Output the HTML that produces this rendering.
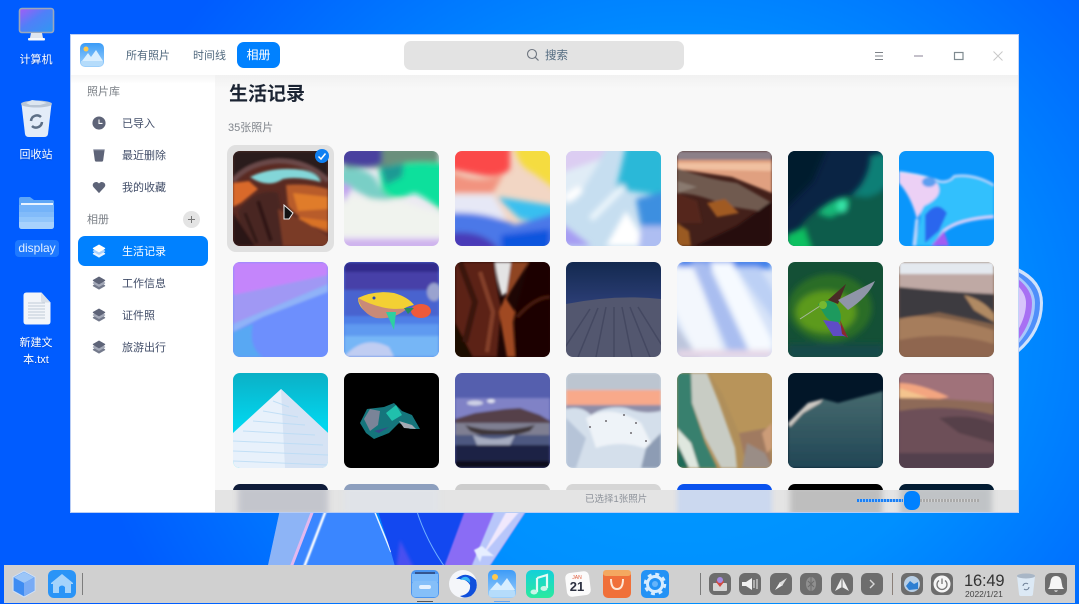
<!DOCTYPE html>
<html><head><meta charset="utf-8">
<style>
*{margin:0;padding:0;box-sizing:border-box}
html,body{width:1079px;height:604px;overflow:hidden}
body{position:relative;font-family:"Liberation Sans","Noto Sans CJK SC",sans-serif;background:radial-gradient(ellipse 600px 540px at 680px 330px,#00a0ff 0%,#0090ff 50%,#0068ff 88%,#005cff 100%);color:#414d68}
.a{position:absolute}
.lbl{position:absolute;color:#fff;font-size:11px;line-height:17px;text-align:center;width:72px;left:0;text-shadow:0 1px 1px rgba(0,30,100,.3)}
#win{position:absolute;left:70px;top:34px;width:949px;height:479px;background:#fff;border:1px solid #b9cdf4;overflow:hidden}
.t{position:absolute;font-size:11px;line-height:16px;white-space:nowrap}
.th{position:absolute;width:95px;height:95px;border-radius:7px;overflow:hidden}
.th svg{display:block;width:95px;height:95px}
.it{position:absolute;left:122px;font-size:11px;line-height:16px;color:#414d68;white-space:nowrap}
.ic{position:absolute;left:92px;width:14px;height:14px}
.tray{position:absolute;top:573px;width:22px;height:22px;border-radius:6px;background:#6d6d6d}
.tray svg{display:block;width:22px;height:22px}
.dk{position:absolute}
</style></head>
<body>
<!-- wallpaper shapes -->
<svg class="a" style="left:0;top:0" width="1079" height="604" viewBox="0 0 1079 604">
<defs><filter id="w1"><feGaussianBlur stdDeviation=".8"/></filter><filter id="w2"><feGaussianBlur stdDeviation="1.500"/></filter></defs>
<path d="M281 505L267 570H400L392 550L372 505Z" fill="#3a86ff"/>
<path d="M281 505L267 570H290L315 505Z" fill="#8db4f6"/>
<path d="M315 505L290 570" stroke="#e2b8ee" stroke-width="3" fill="none"/>
<path d="M328 505L303 570" stroke="#fff" stroke-width="2.500" fill="none" filter="url(#w1)"/>
<path d="M372 505L391 552" stroke="#e8f4ff" stroke-width="1.500" fill="none"/>
<path d="M372 505H470L443 570H392Z" fill="#1348f0" opacity="0"/>
<path d="M376 505H470L443 570H396L391 552Z" fill="#1348f0"/>
<path d="M400 540L415 570H396Z" fill="#4a50f0" filter="url(#w2)"/>
<path d="M415 505Q425 540 447 570" stroke="#6fb0ff" stroke-width="1" fill="none"/>
<path d="M467 505H530L487 570H443Z" fill="#8a6cf5" filter="url(#w1)"/>
<path d="M497 505H530L487 570H470Z" fill="#b8c6fa" filter="url(#w1)"/>
<path d="M510 505H525L482 556Z" fill="#f0e8fc" filter="url(#w1)"/>
<path d="M474 550L482 546L494 556L482 556L480 562Z" fill="#e6eeff" filter="url(#w1)"/>
<path d="M1018 268Q1043 280 1043 303Q1043 332 1018 353Z" fill="#cfe2fc"/>
<path d="M1018 272Q1040 283 1040 303Q1040 329 1018 349Z" fill="#4f8ffa"/>
<path d="M1018 276Q1035 288 1035 303Q1035 325 1018 344Z" fill="#aac8fb"/>
<path d="M1018 279Q1032 290 1032 303Q1032 322 1018 340Z" fill="#a870f3"/>
<path d="M1018 286Q1026 294 1026 303Q1026 316 1018 330Z" fill="#d8c5fb"/>
</svg>

<!-- desktop icons -->
<svg class="a" style="left:18px;top:7px" width="37" height="36" viewBox="0 0 37 36">
<defs><linearGradient id="m1" x1="0" y1="0" x2="1" y2="1"><stop offset="0" stop-color="#a45cf6"/><stop offset=".45" stop-color="#4f80f8"/><stop offset="1" stop-color="#2f98f2"/></linearGradient></defs>
<rect x="1.500" y="1.500" width="34" height="24" rx="2.500" fill="url(#m1)" stroke="#9aa8bc" stroke-width="1.600"/>
<path d="M13 26H24L25 31H12Z" fill="#dfe5ee"/><rect x="10" y="31" width="17" height="2.500" rx="1" fill="#f6f8fb"/></svg>
<div class="lbl" style="top:52px">计算机</div>
<svg class="a" style="left:20px;top:99px" width="33" height="39" viewBox="0 0 33 39">
<path d="M1.500 5L5 35Q5.500 38 9 38H24Q27.500 38 28 35L31.500 5Z" fill="#e3ecf8"/><ellipse cx="16.500" cy="5" rx="15.500" ry="3.500" fill="#b8c5d5"/><path d="M6 4L12 1L20 2L27 4L20 6H10Z" fill="#dde6f0"/>
<path d="M11 22A6 6 0 0 1 21 18M22 23A6 6 0 0 1 12 27" stroke="#5d6f86" stroke-width="2.500" fill="none"/></svg>
<div class="lbl" style="top:147px">回收站</div>
<svg class="a" style="left:19px;top:196px" width="36" height="34" viewBox="0 0 36 34">
<path d="M0 3Q0 1 2 1H11L15 4H33Q35 4 35 6V30Q35 33 32 33H3Q0 33 0 30Z" fill="#5ea6f7"/>
<rect x="2" y="7" width="32" height="2" fill="#e9f3ff"/><rect x="0" y="9" width="35" height="7" fill="#74b3f9"/><rect x="0" y="16" width="35" height="5" fill="#82bbfa"/><rect x="0" y="21" width="35" height="5" fill="#92c6fb"/><path d="M0 26H35V30Q35 33 32 33H3Q0 33 0 30Z" fill="#a8d2fd"/></svg>
<div class="a" style="left:15px;top:240px;width:44px;height:17px;border-radius:4px;background:rgba(60,150,255,.5);color:#e4f0ff;font-size:12px;line-height:17px;text-align:center">display</div>
<svg class="a" style="left:23px;top:292px" width="28" height="33" viewBox="0 0 28 33">
<path d="M3 0H18L27 10V29Q27 32 24 32H3Q0 32 0 29V3Q0 0 3 0Z" transform="translate(.5 .5)" fill="#f2f5f9"/>
<path d="M18 .5L27.500 10.500H20Q18 10.500 18 8.500Z" fill="#d8dfe8"/>
<g stroke="#c0cad6" stroke-width="1"><path d="M5 11H22M5 14H22M5 17H22M5 20H22M5 23H22M5 26H22"/></g></svg>
<div class="lbl" style="top:335px">新建文</div>
<div class="lbl" style="top:352px">本.txt</div>

<!-- window -->
<div id="win"></div>
<div class="a" style="left:71px;top:75px;width:947px;height:437px;background:#fff"></div>
<div class="a" style="left:215px;top:75px;width:803px;height:437px;background:linear-gradient(#f1f1f1 0,#f8f8f8 14px)"></div>
<div class="a" style="left:71px;top:75px;width:144px;height:9px;background:linear-gradient(#f5f5f5,#fff)"></div>

<!-- app logo -->
<svg class="a" style="left:80px;top:43px" width="24" height="24" viewBox="0 0 24 24">
<defs><linearGradient id="lg" x1="0" y1="0" x2="0" y2="1"><stop offset="0" stop-color="#3a9cf7"/><stop offset="1" stop-color="#9ed0fb"/></linearGradient></defs>
<rect width="24" height="24" rx="5" fill="url(#lg)"/><circle cx="6" cy="6" r="2.500" fill="#ffc94d"/><path d="M2 18L8 10L11 14L16 7L23 18Z" fill="#d8eeff"/><path d="M1 18H23V19Q23 23 19 23H5Q1 23 1 19Z" fill="#b5dcfb"/></svg>
<div class="t" style="left:126px;top:48px;color:#526a7f">所有照片</div>
<div class="t" style="left:193px;top:48px;color:#526a7f">时间线</div>
<div class="a" style="left:237px;top:42px;width:43px;height:26px;border-radius:7px;background:#0081ff;color:#fff;font-size:12px;line-height:26px;text-align:center">相册</div>
<div class="a" style="left:404px;top:41px;width:280px;height:29px;border-radius:7px;background:#e3e3e3"></div>
<svg class="a" style="left:526px;top:48px" width="14" height="14" viewBox="0 0 14 14"><circle cx="6" cy="6" r="4.500" stroke="#6f7680" stroke-width="1.100" fill="none"/><path d="M9.300 9.300L12.500 12.500" stroke="#6f7680" stroke-width="1.200"/></svg>
<div class="t" style="left:545px;top:48px;color:#526a7f;font-size:11.500px">搜索</div>
<svg class="a" style="left:870px;top:48px" width="135" height="16" viewBox="0 0 135 16">
<path d="M5 4.500H13M5 8H13M5 11.500H13" stroke="#7d8288" stroke-width="1"/>
<path d="M44 8H53" stroke="#8a8094" stroke-width="1"/>
<rect x="84.500" y="4.500" width="8.500" height="7" fill="none" stroke="#7f8a90" stroke-width="1.200"/>
<path d="M123.500 3.500L132.500 12.500M132.500 3.500L123.500 12.500" stroke="#c9c9c9" stroke-width="1"/></svg>

<!-- sidebar -->
<div class="t" style="left:87px;top:84px;color:#7a7f86">照片库</div>
<svg class="ic" style="top:116px" viewBox="0 0 16 16"><circle cx="8" cy="8" r="7.500" fill="#5e6478"/><path d="M8 4V8.500H12" stroke="#fff" stroke-width="1.200" fill="none"/></svg>
<div class="it" style="top:116px">已导入</div>
<svg class="ic" style="top:148px" viewBox="0 0 16 16"><path d="M1.500 1.500H14.500L12.800 14Q12.600 15.500 11.500 15.500H4.500Q3.400 15.500 3.200 14Z" fill="#5e6478"/><path d="M2 2H14" stroke="#a0a5b4" stroke-width="1.200"/></svg>
<div class="it" style="top:148px">最近删除</div>
<svg class="ic" style="top:180px" viewBox="0 0 16 16"><path d="M8 15L1.800 8.300Q0 6 1.500 3.800Q3 2 5.300 2.300Q7 2.600 8 4Q9 2.600 10.700 2.300Q13 2 14.500 3.800Q16 6 14.200 8.300Z" fill="#5e6478"/></svg>
<div class="it" style="top:180px">我的收藏</div>
<div class="t" style="left:87px;top:212px;color:#7a7f86">相册</div>
<div class="a" style="left:183px;top:211px;width:17px;height:17px;border-radius:50%;background:#e4e4e4"></div>
<svg class="a" style="left:183px;top:211px" width="17" height="17" viewBox="0 0 17 17"><path d="M5 8.500H12M8.500 5V12" stroke="#777" stroke-width="1"/></svg>
<div class="a" style="left:78px;top:236px;width:130px;height:30px;border-radius:7px;background:#0081ff"></div>
<svg class="ic" style="top:244px" viewBox="0 0 16 16"><path d="M1 10.500L8 6.500L15 10.500V11.500L8 15.500L1 11.500Z" fill="#e8f3ff"/><path d="M1 7.500L8 3.500L15 7.500V8.500L8 12.500L1 8.500Z" fill="#a9d2ff"/><path d="M8 .5L15 4.500V5.500L8 9.500L1 5.500V4.500Z" fill="#fff"/></svg>
<div class="it" style="top:244px;color:#fff">生活记录</div>
<svg class="ic" style="top:276px" viewBox="0 0 16 16"><path d="M1 10.500L8 6.500L15 10.500V11.500L8 15.500L1 11.500Z" fill="#747a8c"/><path d="M1 7.500L8 3.500L15 7.500V8.500L8 12.500L1 8.500Z" fill="#a4a9b8"/><path d="M8 .5L15 4.500V5.500L8 9.500L1 5.500V4.500Z" fill="#5e6478"/></svg>
<div class="it" style="top:276px">工作信息</div>
<svg class="ic" style="top:308px" viewBox="0 0 16 16"><path d="M1 10.500L8 6.500L15 10.500V11.500L8 15.500L1 11.500Z" fill="#747a8c"/><path d="M1 7.500L8 3.500L15 7.500V8.500L8 12.500L1 8.500Z" fill="#a4a9b8"/><path d="M8 .5L15 4.500V5.500L8 9.500L1 5.500V4.500Z" fill="#5e6478"/></svg>
<div class="it" style="top:308px">证件照</div>
<svg class="ic" style="top:340px" viewBox="0 0 16 16"><path d="M1 10.500L8 6.500L15 10.500V11.500L8 15.500L1 11.500Z" fill="#747a8c"/><path d="M1 7.500L8 3.500L15 7.500V8.500L8 12.500L1 8.500Z" fill="#a4a9b8"/><path d="M8 .5L15 4.500V5.500L8 9.500L1 5.500V4.500Z" fill="#5e6478"/></svg>
<div class="it" style="top:340px">旅游出行</div>

<!-- content header -->
<div class="a" style="left:229px;top:82px;font-size:19px;line-height:26px;font-weight:bold;color:#1b2433;white-space:nowrap">生活记录</div>
<div class="t" style="left:228px;top:120px;color:#80858c">35张照片</div>
<div class="a" style="left:227px;top:145px;width:107px;height:107px;border-radius:9px;background:#e0e0e0"></div>

<svg width="0" height="0" style="position:absolute"><defs>
<filter id="b" x="-20%" y="-20%" width="140%" height="140%"><feGaussianBlur stdDeviation="3"/></filter>
<filter id="s" x="-20%" y="-20%" width="140%" height="140%"><feGaussianBlur stdDeviation="1.200"/></filter>
</defs></svg>

<!-- row 1 -->
<div class="th" style="left:233px;top:151px"><svg viewBox="0 0 95 95"><rect width="95" height="95" fill="#5a2a22"/>
<g filter="url(#s)"><path d="M0 0H95V30Q60 5 30 12Q10 20 0 35Z" fill="#2c1a1c"/><path d="M0 30Q15 12 45 10Q75 10 95 30" fill="none" stroke="#6a4a48" stroke-width="5"/>
<path d="M53 34Q75 32 95 38V82Q70 72 55 55Z" fill="#b85c2c"/><path d="M60 42L95 46V58L65 60Z" fill="#e07c2c"/><path d="M65 66L95 70V78L72 74Z" fill="#d97228"/>
<path d="M17 26Q40 15 70 19Q85 22 88 31Q65 25 50 28Q35 38 17 26Z" fill="#83d6d8"/>
<path d="M0 32L16 30L25 38L8 52L0 56Z" fill="#d9692a"/>
<path d="M5 60Q25 36 45 42L55 95H10Z" fill="#4a2622"/><path d="M45 58Q70 68 95 85V95H50Z" fill="#7a3a28"/><path d="M0 62L22 95H0Z" fill="#2a1616"/><path d="M25 50L38 90" stroke="#2e1818" stroke-width="4"/><path d="M12 62L24 92" stroke="#2e1818" stroke-width="3"/></g></svg></div>
<div class="th" style="left:344px;top:151px"><svg viewBox="0 0 95 95"><rect width="95" height="95" fill="#eceaf2"/>
<g filter="url(#b)"><rect x="0" y="-5" width="95" height="22" fill="#6b8f7c"/><path d="M-5 -5H38V12Q25 20 -5 12Z" fill="#4a3f9f"/><path d="M35 18Q60 8 100 12V62Q80 45 70 42Q50 52 38 42Z" fill="#0fe09c"/><path d="M-5 18Q20 14 32 28Q38 44 50 48L30 50L-5 30Z" fill="#79cfc6"/><path d="M36 15Q50 15 60 12L58 26L42 34Z" fill="#1a9a94"/><path d="M-5 42Q30 50 60 50Q85 60 100 62V85H-5Z" fill="#f0f3ee"/><path d="M-5 88H100V100H-5Z" fill="#cfb2ee"/><path d="M-5 30L8 36L0 52Z" fill="#c0a0ee"/></g></svg></div>
<div class="th" style="left:455px;top:151px"><svg viewBox="0 0 95 95"><rect width="95" height="95" fill="#f2d6c4"/>
<g filter="url(#b)"><path d="M-5 -5H55V18Q45 28 25 24Q5 20 -5 18Z" fill="#fb4a48"/><path d="M58 -5H100V38L78 22Q62 15 60 -5Z" fill="#f5dc3f"/><path d="M-5 20Q20 34 48 24L38 42H-5Z" fill="#f2937f"/><path d="M42 46L100 55V72L65 68Z" fill="#38bff0"/><path d="M-5 44H38L52 68L-5 64Z" fill="#e6e8f6"/><path d="M-5 62Q30 60 60 74L100 62V100H-5Z" fill="#4c78e8"/><path d="M-5 82Q30 78 45 100H-5Z" fill="#4a3ab8"/><path d="M46 84L95 78V100H46Z" fill="#0f55de"/></g></svg></div>
<div class="th" style="left:566px;top:151px"><svg viewBox="0 0 95 95"><rect width="95" height="95" fill="#c6def0"/>
<g filter="url(#b)"><path d="M60 -5H100V45L50 38Z" fill="#2cb8d8"/><path d="M-5 -5H42L25 22H-5Z" fill="#dccdf2"/><path d="M70 48L100 40V75L75 75Z" fill="#3d8fe0"/><path d="M-5 22L35 8L10 50L-5 55Z" fill="#e0ecf6"/><path d="M0 48L15 38" stroke="#fff" stroke-width="8"/><path d="M25 68L58 35" stroke="#eef7fc" stroke-width="6"/><path d="M40 95L60 60L82 95Z" fill="#fff"/><path d="M-5 72L25 95H-5Z" fill="#a69cf3"/><path d="M75 75H100V100H72Z" fill="#aebef2"/></g></svg></div>
<div class="th" style="left:677px;top:151px"><svg viewBox="0 0 95 95"><rect width="95" height="95" fill="#43201a"/>
<g filter="url(#s)"><rect width="95" height="10" fill="#8c8088"/><path d="M0 9H95V42L55 26L0 18Z" fill="#e0a080"/><path d="M0 12L95 12V20L0 18Z" fill="#f0c0a0"/><path d="M0 17Q30 28 60 32L95 52V62L50 55Q20 42 0 42Z" fill="#6f5a50"/><path d="M0 30L20 36L0 42Z" fill="#8a7a70"/><path d="M30 52L48 48L62 62L40 66Z" fill="#a05a24"/><path d="M0 42L20 50L25 72L0 72Z" fill="#54281c"/><path d="M18 95L60 75L95 50V95Z" fill="#260c0a"/><path d="M0 72L12 80L14 95H0Z" fill="#9a5a20"/></g></svg></div>
<div class="th" style="left:788px;top:151px"><svg viewBox="0 0 95 95"><rect width="95" height="95" fill="#0a2444"/>
<g filter="url(#b)"><path d="M-5 -5H40L25 30L-5 60Z" fill="#031a2e"/><path d="M82 5L100 0V35L80 50L60 48L72 35Q82 20 82 5Z" fill="#0f7f76"/><path d="M15 72Q35 50 60 44L80 46L100 38V100H5Z" fill="#0d5c4c"/><path d="M30 62Q48 44 60 48Q62 58 42 66Z" fill="#14b878"/><ellipse cx="54" cy="55" rx="5" ry="6" fill="#38e8aa"/><path d="M-2 84L16 76L24 100H-2Z" fill="#10c060"/></g></svg></div>
<div class="th" style="left:899px;top:151px"><svg viewBox="0 0 95 95"><rect width="95" height="95" fill="#0a96fb"/>
<g filter="url(#s)"><path d="M0 21Q25 24 40 30Q50 32 55 25Q75 22 95 34V66Q70 68 50 75Q40 85 35 95H15L20 75Q25 60 15 45L0 32Z" fill="#33c0fd"/><path d="M0 21Q20 22 38 32Q46 45 25 55L18 68Q12 45 0 32Z" fill="#ecd0f5"/><path d="M26 64Q38 48 48 62L40 80L26 92Z" fill="#2a66ee"/><path d="M0 21Q25 24 40 30Q50 32 55 25Q75 22 95 34" fill="none" stroke="#e3e4fb" stroke-width="1.500"/><path d="M95 66Q60 68 45 80L35 95" fill="none" stroke="#e9d4f9" stroke-width="2.500"/><path d="M18 68L15 95" stroke="#c8d8fb" stroke-width="3"/><ellipse cx="30" cy="31" rx="7" ry="5" fill="#5c9ff0"/><path d="M32 95L45 80L50 95Z" fill="#a25cf2"/></g></svg></div>

<!-- row 2 -->
<div class="th" style="left:233px;top:262px"><svg viewBox="0 0 95 95"><rect width="95" height="95" fill="#6d8ffd"/>
<g filter="url(#s)"><path d="M0 0H95V15L0 35Z" fill="#c485fb"/><path d="M0 33L95 13V22L0 62Z" fill="#a098f4"/><path d="M0 62L95 22V30L30 55L0 70Z" fill="#90b2f8"/><path d="M0 70L20 62Q15 85 30 95H0Z" fill="#59a8f3"/></g></svg></div>
<div class="th" style="left:344px;top:262px"><svg viewBox="0 0 95 95"><rect width="95" height="95" fill="#4f7fe6"/>
<g filter="url(#s)"><rect width="95" height="10" fill="#332c8c"/><rect y="10" width="95" height="18" fill="#473fa8"/><rect y="28" width="95" height="26" fill="#4a63cf"/><rect y="62" width="95" height="12" fill="#5f9af0"/><rect y="74" width="95" height="21" fill="#76b6f6"/><path d="M0 95Q20 72 45 85L50 95Z" fill="#c0cdf2"/><ellipse cx="90" cy="30" rx="7" ry="9" fill="#9aa3cf"/></g>
<path d="M14 36Q30 28 50 31Q64 35 70 43Q62 44 56 50Q35 58 22 50Q14 44 14 36Z" fill="#f3d034"/><path d="M14 36Q18 52 32 56Q50 58 64 46Q40 50 14 36Z" fill="#c98a78"/><path d="M42 50L50 68L52 50Z" fill="#2ed0a0"/><ellipse cx="77" cy="49" rx="10" ry="7" fill="#ee5a3a"/><path d="M60 46L70 46L64 52Z" fill="#268a60"/><circle cx="30" cy="36" r="1.500" fill="#2a4ab0"/></svg></div>
<div class="th" style="left:455px;top:262px"><svg viewBox="0 0 95 95"><rect width="95" height="95" fill="#1e0604"/>
<g filter="url(#s)"><path d="M0 0H40Q42 30 46 45L42 95H0Z" fill="#5c2416"/><path d="M40 0H56L52 30L47 34Q42 20 40 0Z" fill="#e4e4e4"/><path d="M56 0H74L55 30L50 40Z" fill="#8f4420"/><path d="M50 35L44 50L52 95H60L58 60L60 50Z" fill="#a04a24"/><path d="M74 0H95V95H60L60 50Z" fill="#1c0404"/><path d="M0 60L18 95H0Z" fill="#1e0804"/><path d="M5 0L20 40L10 80" fill="none" stroke="#3a1410" stroke-width="6"/><path d="M62 55Q80 35 95 35" fill="none" stroke="#4a1a10" stroke-width="3"/><path d="M25 10L38 50L32 90" fill="none" stroke="#85402a" stroke-width="4"/></g></svg></div>
<div class="th" style="left:566px;top:262px"><svg viewBox="0 0 95 95"><defs><linearGradient id="dn" x1="0" y1="0" x2="0" y2="1"><stop offset="0" stop-color="#13294f"/><stop offset="1" stop-color="#2d3f78"/></linearGradient></defs><rect width="95" height="45" fill="url(#dn)"/><path d="M0 42Q50 32 95 37V95H0Z" fill="#53576f"/>
<g stroke="#3f435c" stroke-width="1.500" fill="none" opacity=".75"><path d="M48 45V95M40 45L30 95M32 46L12 95M24 47L-4 90M56 45L66 95M64 45L84 95M72 45L100 90"/></g></svg></div>
<div class="th" style="left:677px;top:262px"><svg viewBox="0 0 95 95"><rect width="95" height="95" fill="#d5e2f8"/>
<g filter="url(#b)"><rect y="-5" width="95" height="12" fill="#3f80ea"/><path d="M-5 5L18 5L48 95H20L-5 45Z" fill="#f3f7fd"/><path d="M14 0L30 0L74 95H54Z" fill="#a9bdf0"/><path d="M32 0H55L95 78V95H76Z" fill="#f6faff"/><path d="M58 5H82L100 35V62Z" fill="#bcd0f5"/><path d="M-5 58L25 100H-5Z" fill="#bcc5dc"/><rect y="88" width="95" height="8" fill="#e5d6e6"/></g></svg></div>
<div class="th" style="left:788px;top:262px"><svg viewBox="0 0 95 95"><rect width="95" height="95" fill="#145036"/>
<g filter="url(#b)"><ellipse cx="42" cy="46" rx="42" ry="34" fill="#2c6d28"/><ellipse cx="38" cy="50" rx="30" ry="21" fill="#5c9a1a"/><rect y="82" width="95" height="15" fill="#154a4a"/></g>
<path d="M12 57L32 44" stroke="#a9b8a0" stroke-width="1"/><path d="M30 42Q42 36 48 42Q55 52 52 60Q42 62 36 52Z" fill="#1d9a5e"/><path d="M40 38L58 22L50 42Z" fill="#4a2a26"/><path d="M50 38L87 19Q80 35 60 48Z" fill="#8f95a8"/><path d="M35 58L50 60L60 75L55 74L45 74Z" fill="#5f4cc6"/><path d="M52 58L60 76L54 72Z" fill="#8a2a2e"/><circle cx="35" cy="43" r="4" fill="#76b830"/></svg></div>
<div class="th" style="left:899px;top:262px"><svg viewBox="0 0 95 95"><rect width="95" height="95" fill="#80604a"/>
<g filter="url(#s)"><rect width="95" height="14" fill="#e4e9ef"/><rect y="12" width="95" height="20" fill="#bfa9a4"/><path d="M0 25Q50 30 95 32V62L40 50L0 57Z" fill="#3e3a40"/><path d="M65 33Q85 38 95 52V60L75 48Z" fill="#b08a64"/><path d="M0 57Q30 48 95 68V95H0Z" fill="#a67d5c"/><path d="M0 78Q50 68 95 82V95H0Z" fill="#8f6650"/></g></svg></div>

<!-- row 3 -->
<div class="th" style="left:233px;top:373px"><svg viewBox="0 0 95 95"><defs><linearGradient id="cy" x1="0" y1="0" x2="0" y2="1"><stop offset="0" stop-color="#0bb0c6"/><stop offset=".55" stop-color="#02d6ee"/></linearGradient></defs><rect width="95" height="95" fill="url(#cy)"/><path d="M48 16L95 60V95H0V60Z" fill="#e8f1fb"/><path d="M48 16L52 95H95V60Z" fill="#d6e3f4"/>
<g stroke="#b8dbf5" stroke-width="1" opacity=".8"><path d="M40 28L56 34M30 38L65 44M20 48L72 52M10 58L82 62M0 68L90 72M0 78L95 82M0 88L95 92"/></g></svg></div>
<div class="th" style="left:344px;top:373px"><svg viewBox="0 0 95 95"><rect width="95" height="95" fill="#000"/>
<path d="M16 50L23 36L40 34L50 30L58 38L68 42L76 56L66 56L55 50L45 60L30 66L22 60Z" fill="#15757c"/><path d="M20 46L26 36L36 38L34 52L26 58Z" fill="#7a8498"/><path d="M42 40L52 32L58 42L48 48Z" fill="#20c0ac"/><path d="M55 48L68 52L72 56L60 55Z" fill="#a4aab4"/><path d="M45 54L35 60L30 58Z" fill="#384a8a"/></svg></div>
<div class="th" style="left:455px;top:373px"><svg viewBox="0 0 95 95"><rect width="95" height="95" fill="#555fae"/>
<g filter="url(#s)"><rect y="25" width="95" height="22" fill="#8082c6"/><path d="M0 46L20 40L35 38L50 36L65 35L85 42L95 48V52H0Z" fill="#544048"/><rect y="50" width="95" height="14" fill="#7f7f92"/><path d="M10 52Q40 62 80 52L75 58Q40 70 15 58Z" fill="#3e3438"/><rect y="62" width="95" height="10" fill="#4d5880"/><path d="M18 62Q40 70 60 62L55 72H22Z" fill="#a6acc0"/><rect y="72" width="95" height="23" fill="#1a2344"/><rect y="88" width="95" height="7" fill="#0a0c1a"/><ellipse cx="20" cy="30" rx="8" ry="2.500" fill="#cfd2e6"/><ellipse cx="36" cy="28" rx="4" ry="2" fill="#e0e2ef"/></g></svg></div>
<div class="th" style="left:566px;top:373px"><svg viewBox="0 0 95 95"><rect width="95" height="95" fill="#d4dfea"/>
<g filter="url(#s)"><rect width="95" height="17" fill="#bcc5d0"/><rect y="17" width="95" height="17" fill="#f8a98a"/><path d="M0 32H95V42L0 42Z" fill="#8e8ea8"/><path d="M0 36Q15 32 25 42Q40 32 60 35Q78 42 95 38V95H0Z" fill="#d4dfeb"/><path d="M20 45Q45 30 75 50L90 80Q60 65 30 75Z" fill="#eef3f8"/><path d="M0 45L20 65L10 95H0Z" fill="#b6c4d8"/><path d="M80 75L95 60V95H75Z" fill="#8d9cb4"/></g><g fill="#6e6a70"><circle cx="24" cy="54" r="1"/><circle cx="58" cy="42" r="1"/><circle cx="70" cy="50" r="1"/><circle cx="80" cy="68" r="1"/><circle cx="40" cy="48" r="1"/><circle cx="65" cy="60" r="1"/></g></svg></div>
<div class="th" style="left:677px;top:373px"><svg viewBox="0 0 95 95"><rect width="95" height="95" fill="#b08f5a"/>
<g filter="url(#s)"><path d="M0 0H15L15 30L28 70L40 95H0Z" fill="#37806e"/><path d="M32 0H95V60H90L80 70L62 60L45 20Z" fill="#b8945a"/><path d="M62 60L90 55L95 90L70 95Z" fill="#a07a60"/><path d="M85 60L95 50V75L90 80Z" fill="#cc9c78"/><path d="M70 70L88 80L95 95H65Z" fill="#9a8d86"/><path d="M14 0H30L42 30L58 75L60 95H44L28 65L15 30Z" fill="#c8ccc4"/><path d="M0 55L14 70L22 95H12L0 70Z" fill="#dfe7df"/><path d="M0 70L12 95H0Z" fill="#1e6a58"/></g></svg></div>
<div class="th" style="left:788px;top:373px"><svg viewBox="0 0 95 95"><defs><linearGradient id="sl" x1="0" y1="0" x2="0" y2="1"><stop offset="0" stop-color="#466a6e"/><stop offset="1" stop-color="#214655"/></linearGradient></defs><rect width="95" height="95" fill="#021628"/>
<g filter="url(#s)"><path d="M0 50L20 30L35 26L50 30L65 26L95 18V95H0Z" fill="url(#sl)"/><path d="M0 50L20 30L35 26L32 30L15 40L2 54Z" fill="#cfcac4"/></g></svg></div>
<div class="th" style="left:899px;top:373px"><svg viewBox="0 0 95 95"><rect width="95" height="95" fill="#5b4552"/>
<g filter="url(#s)"><path d="M0 0H95V30L60 28L30 25L0 20Z" fill="#a0727a"/><path d="M0 10Q20 10 50 24L20 30L0 25Z" fill="#f3a580"/><path d="M0 15L30 25L0 25Z" fill="#f4c48e"/><path d="M0 25Q50 25 95 30V42L50 40L0 38Z" fill="#8e6a58"/><path d="M0 38Q50 30 95 42V95H0Z" fill="#6d5058"/><path d="M40 45Q70 40 95 50V70L60 60Z" fill="#574048"/><path d="M0 80H95V95H0Z" fill="#52404e"/></g></svg></div>

<!-- row 4 (partial) -->
<div class="th" style="left:233px;top:484px;background:#0f1c3a;height:7px;border-radius:7px 7px 0 0"></div>
<div class="th" style="left:344px;top:484px;background:#8d9fbe;height:7px;border-radius:7px 7px 0 0"></div>
<div class="th" style="left:455px;top:484px;background:#cdcdcd;height:7px;border-radius:7px 7px 0 0"></div>
<div class="th" style="left:566px;top:484px;background:#d6d6d6;height:7px;border-radius:7px 7px 0 0"></div>
<div class="th" style="left:677px;top:484px;background:#0a52ee;height:7px;border-radius:7px 7px 0 0"></div>
<div class="th" style="left:788px;top:484px;background:#000;height:7px;border-radius:7px 7px 0 0"></div>
<div class="th" style="left:899px;top:484px;background:#031c33;height:7px;border-radius:7px 7px 0 0"></div>

<!-- check badge -->
<div class="a" style="left:315px;top:149px;width:14px;height:14px;border-radius:50%;background:#0f80f2"></div>
<svg class="a" style="left:315px;top:149px" width="14" height="14" viewBox="0 0 14 14"><path d="M3.500 7.500L6 10L10.500 4.500" stroke="#fff" stroke-width="1.500" fill="none"/></svg>
<!-- cursor -->
<svg class="a" style="left:282px;top:204px" width="13" height="17" viewBox="0 0 13 17"><path d="M2 1L11 9L7 15H2Z" fill="#111" stroke="#eee" stroke-width="1"/></svg>

<!-- bottom bar -->
<div class="a" style="left:215px;top:490px;width:803px;height:22px;background:#e4e4e4;overflow:hidden">
<div class="a" style="left:23px;top:-4px;width:90px;height:30px;background:#c3c5cc;filter:blur(3px)"></div>
<div class="a" style="left:129px;top:-4px;width:95px;height:30px;background:#e0e3e8;filter:blur(3px)"></div>
<div class="a" style="left:462px;top:-4px;width:95px;height:30px;background:#cbd8ef;filter:blur(2px)"></div>
<div class="a" style="left:575px;top:-4px;width:92px;height:30px;background:#bebebe;filter:blur(3px)"></div>
<div class="a" style="left:685px;top:-4px;width:92px;height:30px;background:#c0c3c6;filter:blur(3px)"></div>
</div>
<div class="a" style="left:215px;top:512px;width:804px;height:1px;background:#b9cdf4"></div>
<div class="a" style="left:1018px;top:34px;width:1px;height:479px;background:#c3d4f6"></div>
<div class="a" style="left:585px;top:492px;font-size:9.500px;line-height:15px;color:#8d929a;white-space:nowrap">已选择1张照片</div>
<div class="a" style="left:857px;top:499px;width:46px;height:3px;background:repeating-linear-gradient(90deg,#1b80f5 0 2px,#8fc0f5 2px 3px)"></div>
<div class="a" style="left:920px;top:499px;width:59px;height:3px;background:repeating-linear-gradient(90deg,#a9a9a9 0 2px,#d2d2d2 2px 3px)"></div>
<div class="a" style="left:904px;top:491px;width:16px;height:19px;border-radius:7px;background:#0081ff"></div>

<!-- dock -->
<div class="a" style="left:4px;top:565px;width:1071px;height:38px;background:#d0d0d0"></div>
<svg class="dk" style="left:12px;top:570px" width="24" height="28" viewBox="0 0 24 28"><path d="M12 1L23 7V21L12 27L1 21V7Z" fill="#5c9cf3" stroke="#cfe0f6" stroke-width="1"/><path d="M12 2L22 7.500L12 13L2 7.500Z" fill="#9cc6f8"/><path d="M12 13V26L22 20.500V8Z" fill="#79abf5"/><path d="M12 13V26L2 20.500V8Z" fill="#3e8cf2"/></svg>
<svg class="dk" style="left:48px;top:570px" width="28" height="28" viewBox="0 0 28 28"><rect width="28" height="28" rx="6" fill="#2a94f7"/><path d="M14 4L25 13V14H23V23H17V17Q14 14 11 17V23H5V14H3V13Z" fill="#a5d3fb"/></svg>
<div class="a" style="left:82px;top:573px;width:1px;height:22px;background:#7d7d7d"></div>

<svg class="dk" style="left:411px;top:570px" width="28" height="28" viewBox="0 0 28 28"><rect width="28" height="28" rx="5" fill="#4a94ef"/><path d="M4 2H24V4H4Z" fill="#34558f"/><path d="M1 4H27V12H1Z" fill="#7ab9fa"/><rect x="1" y="11" width="26" height="16" rx="3" fill="#85bff9"/><rect x="8" y="15" width="12" height="4" rx="2" fill="#e4f1ff"/></svg>
<div class="a" style="left:417px;top:601px;width:16px;height:1px;background:#555"></div>
<svg class="dk" style="left:449px;top:570px" width="28" height="28" viewBox="0 0 28 28"><circle cx="14" cy="14" r="14" fill="#f4f6fa"/><path d="M7 9Q17 0 27 10Q30 20 22 26Q15 29 11 26Q22 24 21 15Q17 8 7 9Z" fill="#0f4fdc"/><path d="M11 10Q17 9 21 13Q22 9 18 7Q14 6 11 10Z" fill="#38b6f5"/></svg>
<svg class="dk" style="left:488px;top:570px" width="28" height="28" viewBox="0 0 28 28"><defs><linearGradient id="ph" x1="0" y1="0" x2="0" y2="1"><stop offset="0" stop-color="#3d9bf7"/><stop offset="1" stop-color="#9fd0fb"/></linearGradient></defs><rect width="28" height="28" rx="5" fill="url(#ph)"/><circle cx="7" cy="7" r="3" fill="#ffc94d"/><path d="M2 20L9 12L13 16L19 8L27 20Z" fill="#d8eeff"/><rect x="1" y="20" width="26" height="7" rx="2" fill="#b5dcfb"/></svg>
<div class="a" style="left:494px;top:601px;width:16px;height:1px;background:#6ea8ee"></div>
<svg class="dk" style="left:526px;top:570px" width="28" height="28" viewBox="0 0 28 28"><defs><linearGradient id="mu" x1="0" y1="0" x2="0" y2="1"><stop offset="0" stop-color="#14d0da"/><stop offset="1" stop-color="#2bea9e"/></linearGradient></defs><rect width="28" height="28" rx="6" fill="url(#mu)"/><path d="M11 8L21 5V18" stroke="#e6fbf5" stroke-width="2.200" fill="none"/><path d="M11 8V22" stroke="#e6fbf5" stroke-width="2.200"/><ellipse cx="8" cy="22" rx="3.500" ry="2.500" fill="#c8f6e8"/><ellipse cx="18" cy="18.500" rx="3.500" ry="2.500" fill="#c8f6e8"/></svg>
<svg class="dk" style="left:564px;top:570px" width="28" height="28" viewBox="0 0 28 28"><rect x="2" y="2" width="24" height="24" rx="5" fill="#fbfbfb" transform="rotate(-7 14 14)"/><text x="13" y="9" font-size="5" fill="#e05a3a" text-anchor="middle" font-family="Liberation Sans">JAN</text><text x="13" y="21" font-size="13" font-weight="bold" fill="#2c3040" text-anchor="middle" font-family="Liberation Sans">21</text></svg>
<svg class="dk" style="left:603px;top:570px" width="28" height="28" viewBox="0 0 28 28"><rect width="28" height="28" rx="5" fill="#f0703a"/><rect width="28" height="6" rx="3" fill="#f4a860"/><path d="M8 9Q8 19 14 19Q20 19 20 9" stroke="#fde8d8" stroke-width="2" fill="none"/></svg>
<svg class="dk" style="left:641px;top:570px" width="28" height="28" viewBox="0 0 28 28"><rect width="28" height="28" rx="5" fill="#2392f5"/><circle cx="14" cy="14" r="7.500" fill="none" stroke="#d6ecff" stroke-width="3"/><circle cx="14" cy="14" r="10" fill="none" stroke="#d6ecff" stroke-width="2.500" stroke-dasharray="4 3.850"/><circle cx="14" cy="14" r="3" fill="#66b4fa"/></svg>

<div class="a" style="left:700px;top:573px;width:1px;height:22px;background:#7a7a7a"></div>
<div class="tray" style="left:709px"><svg viewBox="0 0 22 22"><rect x="4" y="10" width="14" height="8" rx="1" fill="#d5d5d5"/><path d="M7 9Q11 1 15 9L11 14Z" fill="#d0483e"/><circle cx="11" cy="7" r="3" fill="#a68ae0"/></svg></div>
<div class="tray" style="left:739px"><svg viewBox="0 0 22 22"><path d="M3 9H7L13 5V17L7 13H3Z" fill="#f0f0f0"/><path d="M15 7V15M18 6V16" stroke="#d0d0d0" stroke-width="1.300"/></svg></div>
<div class="tray" style="left:770px"><svg viewBox="0 0 22 22"><path d="M5 17L10 9L13 12Z" fill="#f4f4f4"/><path d="M17 5L12 13L9 10Z" fill="#dcdcdc"/></svg></div>
<div class="tray" style="left:800px"><svg viewBox="0 0 22 22"><ellipse cx="11" cy="11" rx="5" ry="7" fill="#8f8f8f"/><path d="M8 8L14 14M14 8L8 14M11 4V18" stroke="#6d6d6d" stroke-width="1"/></svg></div>
<div class="tray" style="left:831px"><svg viewBox="0 0 22 22"><path d="M11 4L18 18L11 14L4 18Z" fill="#eee"/><path d="M11 4V14" stroke="#6d6d6d" stroke-width="1"/></svg></div>
<div class="tray" style="left:861px"><svg viewBox="0 0 22 22"><path d="M9 7L13 11L9 15" stroke="#d8d8d8" stroke-width="1.400" fill="none"/></svg></div>
<div class="a" style="left:892px;top:573px;width:1px;height:22px;background:#8a7f78"></div>
<div class="tray" style="left:901px"><svg viewBox="0 0 22 22"><circle cx="11" cy="11" r="8" fill="#b8cfe6"/><path d="M5 13L9 8L13 11L17 9L17 16L8 17Z" fill="#2e7fd2"/></svg></div>
<div class="tray" style="left:931px"><svg viewBox="0 0 22 22"><circle cx="11" cy="11" r="8.500" fill="#f6f6f6"/><path d="M8 7.500A5 5 0 1 0 14 7.500M11 5.500V11" stroke="#777" stroke-width="1.300" fill="none"/></svg></div>
<div class="a" style="left:964px;top:571px;font-size:16.500px;line-height:20px;color:#333;white-space:nowrap;letter-spacing:-.2px">16:49</div>
<div class="a" style="left:965px;top:589px;font-size:8.500px;line-height:11px;color:#444;white-space:nowrap">2022/1/21</div>
<svg class="dk" style="left:1016px;top:573px" width="20" height="24" viewBox="0 0 20 24"><path d="M1 3L3 21Q3 23 5 23H15Q17 23 17 21L19 3Z" fill="#dce9f5"/><ellipse cx="10" cy="3" rx="9" ry="2.500" fill="#a8b6c6"/><path d="M7 13A3 3 0 0 1 12 11M13 14A3 3 0 0 1 8 16" stroke="#6d7f96" stroke-width="1" fill="none"/></svg>
<div class="tray" style="left:1045px"><svg viewBox="0 0 22 22"><path d="M11 3Q16 3 16.500 9L17.500 14L19 16H3L4.500 14L5.500 9Q6 3 11 3Z" fill="#f6f6f6"/><path d="M9 17.500Q11 20 13 17.500Z" fill="#f6f6f6"/></svg></div>
</body></html>
